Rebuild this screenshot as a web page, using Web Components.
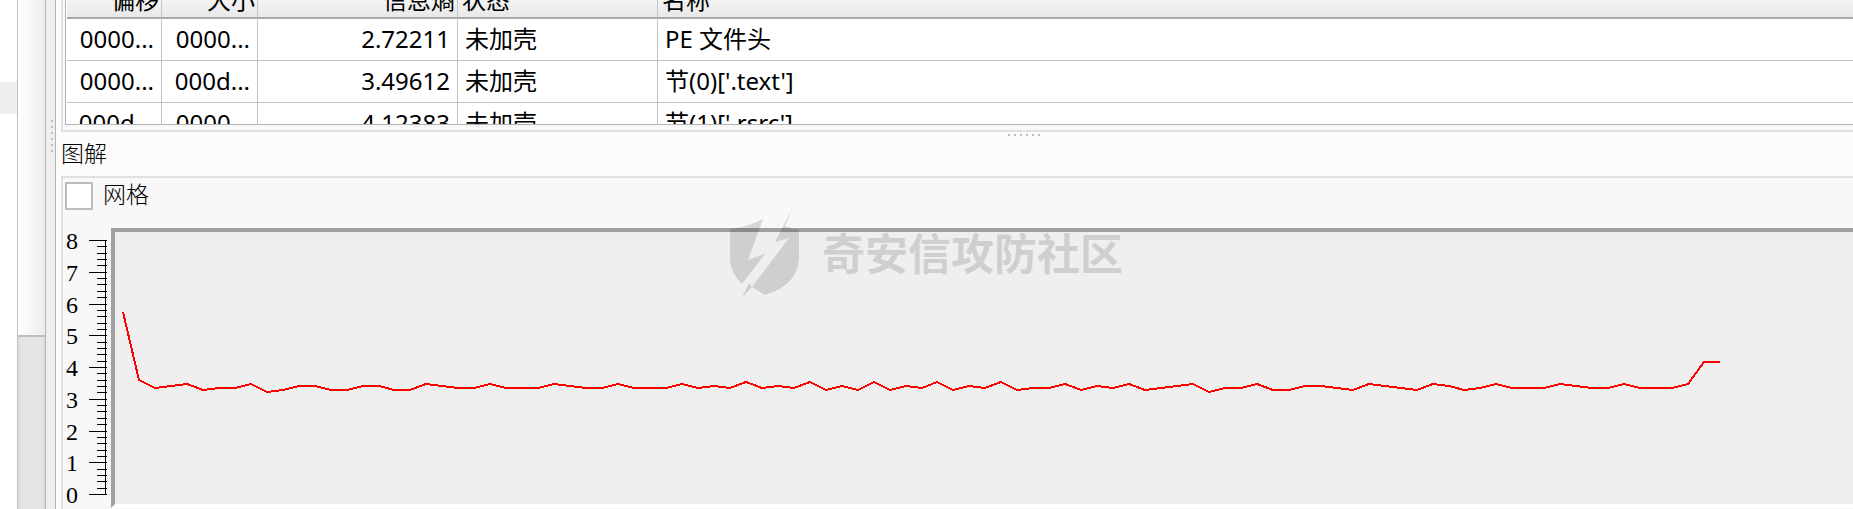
<!DOCTYPE html>
<html lang="zh-CN">
<head>
<meta charset="utf-8">
<title>熵</title>
<style>
    html, body {
        margin: 0;
        height: 100%;
        overflow: hidden;
        background: #fcfcfc;
        color: #000;
        font-family: "Noto Sans", "Noto Sans CJK SC", sans-serif;
        font-size: 24px;
    }
</style>
</head>
<body>
<entropy-window>
    <side-scroll slot="side"></side-scroll>
    <split-handle slot="side" vertical></split-handle>
    <group-box kind="top"><region-table></region-table></group-box>
    <split-handle></split-handle>
    <group-box kind="bottom" label="图解">
        <check-option>网格</check-option>
        <entropy-chart></entropy-chart>
    </group-box>
    <water-mark slot="overlay">奇安信攻防社区</water-mark>
</entropy-window>

<script>
class EntropyWindow extends HTMLElement {
    constructor() {
        super();
        this.attachShadow({ mode: 'open' });
        this.shadowRoot.innerHTML = `
            <style>
                :host {
                    display: flex;
                    position: relative;
                    height: 100%;
                    overflow: hidden;
                }
                main {
                    flex: 1;
                    min-width: 0;
                    display: flex;
                    flex-direction: column;
                    padding-left: 5px;
                }
            </style>
            <slot name="side"></slot>
            <main><slot></slot></main>
            <slot name="overlay"></slot>
        `;
    }
}

// edge of the list on the left, together with its scroll bar
class SideScroll extends HTMLElement {
    constructor() {
        super();
        this.attachShadow({ mode: 'open' });
        this.shadowRoot.innerHTML = `
            <style>
                :host {
                    display: flex;
                    flex: none;
                    width: 45px;
                }
                .list {
                    width: 17px;
                    padding-top: 82px;
                    background: #fff;
                }
                .row {
                    height: 32px;
                    background: #efefef;
                }
                .track {
                    flex: 1;
                    border-left: 1px solid #c0c0c0;
                    background: linear-gradient(to right, #dadada, #e5e5e5 3px, #e5e5e5 24px, #dadada);
                }
                .thumb {
                    height: 335px;
                    border-bottom: 2px solid #bdbdbd;
                    background: linear-gradient(to right, #fff, #fafafa 30%, #ebebeb);
                }
            </style>
            <div class="list"><div class="row"></div></div>
            <div class="track"><div class="thumb"></div></div>
        `;
    }
}

class SplitHandle extends HTMLElement {
    constructor() {
        super();
        this.attachShadow({ mode: 'open' });
        this.shadowRoot.innerHTML = `
            <style>
                :host {
                    display: flex;
                    flex: none;
                    justify-content: center;
                    gap: 4px;
                    padding-top: 2px;
                    padding-left: 134px;
                    height: 6px;
                }
                :host([vertical]) {
                    box-sizing: border-box;
                    flex-direction: column;
                    justify-content: flex-start;
                    align-items: center;
                    width: 11px;
                    height: auto;
                    padding: 120px 0 0 2px;
                    border: solid #b4b4b4;
                    border-width: 0 1px;
                    background: #efefef;
                }
                i {
                    width: 2px;
                    height: 2px;
                    background: #bebebe;
                }
            </style>
            <i></i><i></i><i></i><i></i><i></i><i></i>
        `;
    }
}

class GroupBox extends HTMLElement {
    constructor() {
        super();
        this.attachShadow({ mode: 'open' });
        this.shadowRoot.innerHTML = `
            <style>
                :host {
                    display: flex;
                    flex-direction: column;
                }
                :host([kind="bottom"]) {
                    flex: 1;
                    min-height: 0;
                }
                h2 {
                    margin: 0;
                    height: 36px;
                    font: 300 23px/30px "Liberation Serif", "Noto Sans CJK SC", sans-serif;
                }
                .box {
                    flex: 1;
                    min-height: 0;
                    border: solid #e0e0e0;
                    border-width: 0 0 2px 2px;
                    padding: 0 0 5px 2px;
                    background: #f8f8f8;
                }
                :host([kind="bottom"]) .box {
                    border-width: 2px 0 0 2px;
                    padding: 4px 0 0 2px;
                }
            </style>
            <h2></h2>
            <div class="box"><slot></slot></div>
        `;
    }

    connectedCallback() {
        const title = this.shadowRoot.querySelector('h2');
        if (this.hasAttribute('label')) {
            title.textContent = this.getAttribute('label');
        } else {
            title.remove();
        }
    }
}

const REGIONS = [
    ['0000...', '0000...', '2.72211', '未加壳', 'PE 文件头'],
    ['0000...', '000d...', '3.49612', '未加壳', "节(0)['.text']"],
    ['000d...', '0000...', '4.12383', '未加壳', "节(1)['.rsrc']"],
];

class RegionTable extends HTMLElement {
    constructor() {
        super();
        this.attachShadow({ mode: 'open' });
        this.shadowRoot.innerHTML = `
            <style>
                :host {
                    display: block;
                    height: 124px;
                    overflow: hidden;
                    border-left: 1px solid #b4b4b4;
                    border-bottom: 1px solid #b4b4b4;
                    padding-left: 1px;
                    background: #fff;
                }
                table {
                    width: 100%;
                    table-layout: fixed;
                    border-collapse: separate;
                    border-spacing: 0;
                }
                col { width: 200px; }
                col.offset { width: 95px; }
                col.size { width: 96px; }
                col.name { width: auto; }
                th, td {
                    box-sizing: border-box;
                    text-align: left;
                    font-weight: 400;
                    white-space: nowrap;
                    border-right: 1px solid #c4c4c4;
                }
                th {
                    padding: 0 2px 0 4px;
                    border-bottom: 2px solid #a9a9a9;
                    background: linear-gradient(#f4f4f4, #e8e8e8);
                }
                /* the header is scrolled half out of view */
                th div {
                    display: flex;
                    align-items: flex-end;
                    height: 12px;
                    padding-bottom: 5px;
                    line-height: 24px;
                }
                td {
                    height: 42px;
                    padding: 0 7px 2px;
                    line-height: 32px;
                    border-bottom: 1px solid #c4c4c4;
                }
                th:nth-child(-n+3) div { justify-content: flex-end; }
                td:nth-child(-n+3) { text-align: right; }
                th:last-child, td:last-child { border-right: 0; }
            </style>
            <table>
                <colgroup><col class="offset"><col class="size"><col><col><col class="name"></colgroup>
                <thead>
                    <tr>
                        <th><div>偏移</div></th>
                        <th><div>大小</div></th>
                        <th><div>信息熵</div></th>
                        <th><div>状态</div></th>
                        <th><div>名称</div></th>
                    </tr>
                </thead>
                <tbody></tbody>
            </table>
        `;
    }

    connectedCallback() {
        const body = this.shadowRoot.querySelector('tbody');
        REGIONS.forEach(region => {
            const row = body.insertRow();
            region.forEach(text => row.insertCell().textContent = text);
        });
    }
}

class CheckOption extends HTMLElement {
    constructor() {
        super();
        this.attachShadow({ mode: 'open' });
        this.shadowRoot.innerHTML = `
            <style>
                :host { display: flex; }
                label {
                    display: flex;
                    align-items: center;
                    gap: 10px;
                    height: 28px;
                    font: 300 23px/30px "Liberation Serif", "Noto Sans CJK SC", sans-serif;
                }
                input {
                    appearance: none;
                    box-sizing: border-box;
                    width: 28px;
                    height: 28px;
                    margin: 0;
                    border: 2px solid #bcbcbc;
                    border-radius: 1px;
                    background: #fff;
                }
                input:checked { background: #808080; }
            </style>
            <label><input type="checkbox"><slot></slot></label>
        `;
    }
}

// y of the curve inside the plot, one sample every 16px
const SAMPLES = [
    80, 148, 156, 154, 152, 158, 156, 156, 152, 160, 158, 154, 154, 158, 158, 154, 154,
    158, 158, 152, 154, 156, 156, 152, 156, 156, 156, 152, 154, 156, 156, 152, 156, 156,
    156, 152, 156, 154, 156, 150, 156, 154, 156, 150, 158, 154, 158, 150, 158, 154, 156,
    150, 158, 154, 156, 150, 158, 156, 156, 152, 158, 154, 156, 152, 158, 156, 154, 152,
    160, 156, 156, 152, 158, 158, 154, 154, 156, 158, 152, 154, 156, 158, 152, 154, 158,
    156, 152, 156, 156, 156, 152, 154, 156, 156, 152, 156, 156, 156, 152, 130, 130,
];

class EntropyChart extends HTMLElement {
    constructor() {
        super();
        this.attachShadow({ mode: 'open' });
        this.shadowRoot.innerHTML = `
            <style>
                :host {
                    display: flex;
                    padding-top: 18px;
                }
                .labels {
                    display: flex;
                    flex-direction: column;
                    justify-content: space-between;
                    width: 23px;
                    height: 280px;
                    padding-left: 1px;
                    font: 24px/26px "Liberation Serif", serif;
                }
                .scale {
                    flex: none;
                    width: 18px;
                    height: 280px;
                    margin-right: 4px;
                    shape-rendering: crispEdges;
                }
                .plot {
                    flex: 1;
                    min-width: 0;
                    height: 272px;
                    border: 4px solid #a0a0a0;
                    border-right: 0;
                    border-bottom-color: #fff;
                    background: #efefef;
                    overflow: hidden;
                }
                .plot svg { display: block; width: 100%; height: 100%; }
            </style>
            <div class="labels"></div>
            <svg class="scale" stroke="#000" fill="none"><path/></svg>
            <div class="plot"><svg><polyline fill="none" stroke="#f00" stroke-width="2" shape-rendering="crispEdges"/></svg></div>
        `;
    }

    connectedCallback() {
        const labels = this.shadowRoot.querySelector('.labels');
        for (let value = 8; value >= 0; value--) {
            const label = document.createElement('span');
            label.textContent = value;
            labels.appendChild(label);
        }

        let ticks = 'M16.5 12V267';
        for (let i = 0; i <= 40; i++) {
            const y = 12.5 + Math.round(i * 254 / 40);
            ticks += `M${i % 5 ? 8 : 0} ${y}H18`;
        }
        this.shadowRoot.querySelector('.scale path').setAttribute('d', ticks);

        const points = SAMPLES.map((y, i) => `${8 + Math.round(i * 15.97)},${y}`);
        this.shadowRoot.querySelector('polyline').setAttribute('points', points.join(' '));
    }
}

class WaterMark extends HTMLElement {
    constructor() {
        super();
        this.attachShadow({ mode: 'open' });
        this.shadowRoot.innerHTML = `
            <style>
                :host {
                    position: absolute;
                    inset: 0;
                    display: flex;
                    align-items: center;
                    justify-content: center;
                    gap: 22px;
                    padding-bottom: 4px;
                    pointer-events: none;
                    font: 700 43px/64px "Noto Sans CJK SC", sans-serif;
                    opacity: 0.13;
                }
                span { padding-bottom: 4px; }
            </style>
            <svg width="70" height="92" viewBox="0 0 70 92">
                <path d="M0 22Q18 20 33 12L18 53L35 47L12 77Q0 66 0 50Z"/>
                <path d="M63 0L55 19Q62 22 69 23V51Q68 78 35 88L22 80L59 31L45 35Z"/>
                <path d="M12 91L19 76L22 80Z"/>
            </svg>
            <span><slot></slot></span>
        `;
    }
}

customElements.define('entropy-window', EntropyWindow);
customElements.define('side-scroll', SideScroll);
customElements.define('split-handle', SplitHandle);
customElements.define('group-box', GroupBox);
customElements.define('region-table', RegionTable);
customElements.define('check-option', CheckOption);
customElements.define('entropy-chart', EntropyChart);
customElements.define('water-mark', WaterMark);
</script>
</body>
</html>
